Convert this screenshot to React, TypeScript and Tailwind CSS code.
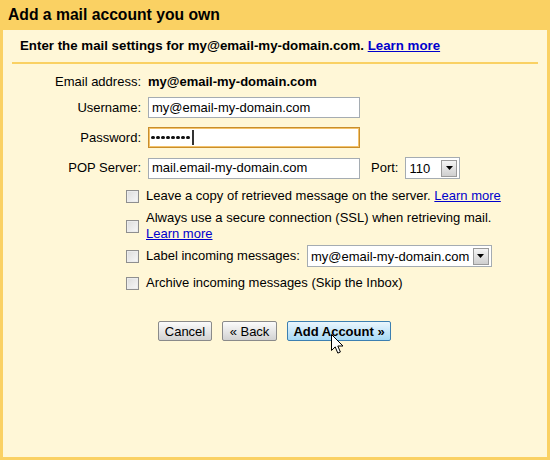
import React from "react";

const font = "font-['Liberation_Sans',Arial,sans-serif]";

function Checkbox() {
  return (
    <span className="block w-[13px] h-[13px] shrink-0 border border-[#8f8f8f] bg-gradient-to-br from-[#dcdcdc] to-[#f8f8f8] shadow-[inset_0_0_0_1px_#ececec]" />
  );
}

function ArrowButton() {
  return (
    <span className="flex items-center justify-center w-[16px] h-[17px] border border-[#9a9a9a] bg-gradient-to-b from-[#f4f4f4] to-[#cfcfcf]">
      <svg width="7" height="4" viewBox="0 0 7 4">
        <path d="M0 0h7L3.5 4z" fill="#000" />
      </svg>
    </span>
  );
}

function Select({ value, width }: { value: string; width: string }) {
  return (
    <div className={`flex items-center justify-between h-[22px] ${width} border border-[#a5acb2] bg-white pl-[3px] pr-[2px]`}>
      <span className="text-[13px] leading-none">{value}</span>
      <ArrowButton />
    </div>
  );
}

function Field({ label, children }: { label: string; children: React.ReactNode }) {
  return (
    <div className="flex items-center gap-[7px] mt-[9px]">
      <span className="w-[129px] text-right text-[13px]">{label}</span>
      {children}
    </div>
  );
}

const inputCls = "w-[212px] h-[21px] border border-[#a5acb2] bg-white pl-[3px] flex items-center text-[13px]";

function Pointer() {
  return (
    <svg className="absolute left-[331px] top-[334px]" width="13" height="21" viewBox="0 0 13 21">
      <path
        d="M0.5 0.5v16l3.7-3.6 2.6 6.2 2.6-1.1-2.6-6h5.2z"
        fill="#fff"
        stroke="#000"
        strokeWidth="1"
        strokeLinejoin="round"
      />
    </svg>
  );
}

export default function App() {
  return (
    <div className={`relative w-[550px] h-[460px] bg-[#fad163] flex flex-col text-black ${font}`}>
      <div className="h-[30px] pl-[8px] flex items-center text-[15.7px] font-bold">Add a mail account you own</div>
      <div className="flex-1 mx-[3px] mb-[3px] bg-[#fff7d7] px-[9px]">
        <div className="h-[34px] pl-[8px] flex items-center border-b-2 border-[#fad163] text-[13.3px] font-bold">
          Enter the mail settings for my@email-my-domain.com.&nbsp;
          <a className="text-[#0000cc] underline">Learn more</a>
        </div>

        <div className="flex items-center gap-[7px] mt-[9px] h-[18px]">
          <span className="w-[129px] text-right text-[13px]">Email address:</span>
          <span className="text-[13px] font-bold">my@email-my-domain.com</span>
        </div>
        <div className="flex items-center gap-[7px] mt-[6px]">
          <span className="w-[129px] text-right text-[13px]">Username:</span>
          <div className={inputCls}>my@email-my-domain.com</div>
        </div>
        <Field label="Password:">
          <div className="w-[212px] h-[21px] border border-[#c98e2c] shadow-[inset_0_0_0_1px_#f3c26b] bg-white pl-[2px] flex items-center">
            <span className="flex gap-[1.5px]">
              {Array.from({ length: 8 }).map((_, i) => (
                <span key={i} className="block w-[3.5px] h-[3.5px] rounded-full bg-[#111]" />
              ))}
            </span>
            <span className="ml-[2px] w-[2px] h-[15px] bg-[#333]" />
          </div>
        </Field>
        <Field label="POP Server:">
          <div className={inputCls}>mail.email-my-domain.com</div>
          <span className="ml-[4px] text-[13px]">Port:</span>
          <Select value="110" width="w-[55px]" />
        </Field>

        <div className="pl-[114px] text-[13px]">
          <div className="flex items-center gap-[7px] mt-[9px] h-[16px]">
            <Checkbox />
            <span>
              Leave a copy of retrieved message on the server.{" "}
              <a className="text-[#0000cc] underline">Learn more</a>
            </span>
          </div>
          <div className="flex items-center gap-[7px] mt-[6px]">
            <Checkbox />
            <span className="leading-[16px]">
              Always use a secure connection (SSL) when retrieving mail.
              <br />
              <a className="text-[#0000cc] underline">Learn more</a>
            </span>
          </div>
          <div className="flex items-center gap-[7px] mt-[3px]">
            <Checkbox />
            <span>Label incoming messages:</span>
            <Select value="my@email-my-domain.com" width="w-[185px]" />
          </div>
          <div className="flex items-center gap-[7px] mt-[8px] h-[16px]">
            <Checkbox />
            <span>Archive incoming messages (Skip the Inbox)</span>
          </div>
        </div>

        <div className="flex items-center gap-[10px] mt-[30px] pl-[146px] text-[13px]">
          <button className="h-[20px] w-[54px] border border-[#8a8a8a] rounded-[2px] bg-gradient-to-b from-[#fbfbfb] to-[#d2d2d2] leading-none">
            Cancel
          </button>
          <button className="h-[20px] w-[55px] border border-[#8a8a8a] rounded-[2px] bg-gradient-to-b from-[#fbfbfb] to-[#d2d2d2] leading-none">
            « Back
          </button>
          <button className="h-[20px] w-[104px] border border-[#3c7fb1] rounded-[2px] bg-gradient-to-b from-[#eaf6fd] to-[#a7d9f5] font-bold leading-none">
            Add Account »
          </button>
        </div>
      </div>
      <Pointer />
    </div>
  );
}
